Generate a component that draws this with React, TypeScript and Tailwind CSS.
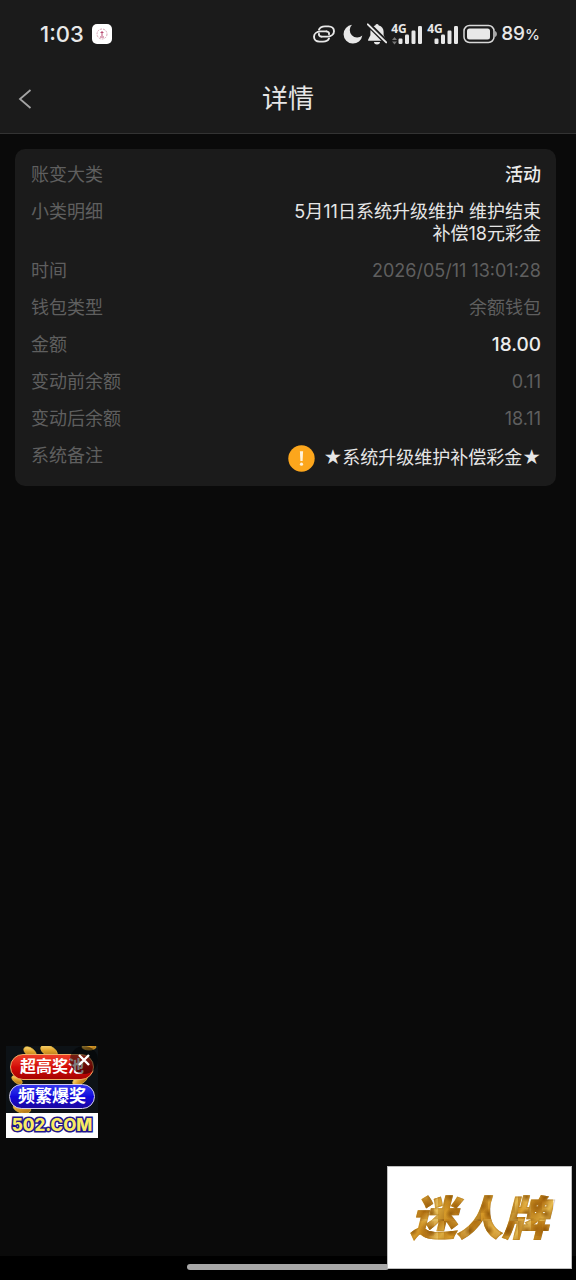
import type { ReactNode } from 'react';

type Tone = 'muted' | 'bright' | 'strong';

const toneClass: Record<Tone, string> = {
  muted: 'text-[#5f5f5f]',
  bright: 'text-[#e6e6e6]',
  strong: 'font-medium text-[#ececec]',
};

const rows: { label: string; value: ReactNode; tone: Tone }[] = [
  { label: '账变大类', value: '活动', tone: 'strong' },
  { label: '小类明细', value: '5月11日系统升级维护 维护结束补偿18元彩金', tone: 'bright' },
  { label: '时间', value: '2026/05/11 13:01:28', tone: 'muted' },
  { label: '钱包类型', value: '余额钱包', tone: 'muted' },
  { label: '金额', value: <span className="block text-[19px] leading-[22px]">18.00</span>, tone: 'strong' },
  { label: '变动前余额', value: '0.11', tone: 'muted' },
  { label: '变动后余额', value: '18.11', tone: 'muted' },
  { label: '系统备注', value: <Remark />, tone: 'bright' },
];

function Remark() {
  return (
    <span className="flex h-[26px] items-center gap-2">
      <svg className="size-[27px]" viewBox="0 0 27 27" aria-hidden="true">
        <circle cx="13.5" cy="13.5" r="13.2" fill="#fca61c" />
        <path d="M11.9 6.2h3.2l-.5 9.8h-2.2z" fill="#fff3dc" />
        <circle cx="13.5" cy="19.2" r="1.6" fill="#fff3dc" />
      </svg>
      <span>★系统升级维护补偿彩金★</span>
    </span>
  );
}

function Signal({ arrows = false }: { arrows?: boolean }) {
  return (
    <span className="relative block h-[22px] w-8">
      <svg className="h-[22px] w-8" viewBox="0 0 32 22" fill="#e8e8e8" aria-hidden="true">
        {arrows && <path d="M1 17l2.5-3 2.5 3zM1 18.5l2.5 3 2.5-3z" fill="#777" />}
        <rect x="7.5" y="15.5" width="4" height="5.5" rx="1.2" />
        <rect x="14" y="11.5" width="4" height="9.5" rx="1.2" />
        <rect x="20.5" y="7.5" width="4" height="13.5" rx="1.2" />
        <rect x="27" y="3" width="4" height="18" rx="1.2" />
      </svg>
      <span className="absolute top-0 left-0 font-['Open_Sans',sans-serif] text-[12px] leading-[11px] font-bold">4G</span>
    </span>
  );
}

function StatusBar() {
  return (
    <div className="flex h-[68px] items-center justify-between pr-9 pl-10 text-[#e8e8e8]">
      <div className="flex items-center gap-2">
        <span className="text-[22px] leading-7 font-medium">1:03</span>
        <svg className="size-5" viewBox="0 0 20 20" fill="none" aria-hidden="true">
          <rect width="20" height="20" rx="5" fill="#fff" />
          <circle cx="10" cy="10" r="5" stroke="#d9a3b4" strokeDasharray="2 1" />
          <path d="M10 7v5M8 13h4M8.5 8.5h3" stroke="#b84c72" />
        </svg>
      </div>
      <div className="flex items-center gap-1">
        <svg className="mr-1 h-[18px] w-[22px]" viewBox="0 0 22 18" fill="none" stroke="#e8e8e8" strokeWidth="1.9" strokeLinecap="round" aria-hidden="true">
          <path d="M8.5 11.6H14.5C18.5 11.4 21 9 21 6.2C21 3.4 18.8 1.4 15.5 1.4H12C9.2 1.4 6.8 2.6 6 4.6" />
          <path d="M13.5 6.4H7.5C3.5 6.6 1 9 1 11.8C1 14.6 3.2 16.6 6.5 16.6H10C12.8 16.6 15.2 15.4 16 13.4" />
          <path d="M8.5 11.6C6.6 11.4 5.6 10 6 8.8M13.5 6.4C15.4 6.6 16.4 8 16 9.2" />
        </svg>
        <svg className="size-5" viewBox="0 0 20 20" aria-hidden="true">
          <path d="M9 .8A9.4 9.4 0 1 0 19.3 11.4A7 7 0 0 1 9 .8Z" fill="#e8e8e8" />
        </svg>
        <svg className="h-[22px] w-5" viewBox="0 0 20 22" fill="#e8e8e8" aria-hidden="true">
          <path d="M10 .9a1.8 1.8 0 0 1 1.8 1.5c3 .8 4.8 3.1 4.8 6.3v3.6l2.3 4.4v1H1.1v-1l2.3-4.4V8.7c0-3.2 1.8-5.5 4.8-6.3A1.8 1.8 0 0 1 10 .9ZM7 19h6a3 2.4 0 0 1-6 0Z" />
          <path d="M0 0L20 20" stroke="#1b1b1b" strokeWidth="5" />
          <path d="M.8 1.4L19.2 19.4" stroke="#e8e8e8" strokeWidth="2" strokeLinecap="round" />
        </svg>
        <Signal arrows />
        <Signal />
        <svg className="h-5 w-[34px]" viewBox="0 0 34 20" fill="none" aria-hidden="true">
          <rect x="1" y="1.5" width="30" height="17" rx="5.5" stroke="#d8d8d8" strokeWidth="1.5" />
          <rect x="4" y="4.5" width="23" height="11" rx="2.5" fill="#e8e8e8" />
          <path d="M32.3 7c1.8.8 1.8 5.2 0 6z" fill="#e8e8e8" />
        </svg>
        <span className="text-[19px] leading-7 font-medium">
          89<span className="text-[15px]">%</span>
        </span>
      </div>
    </div>
  );
}

function Coins() {
  return (
    <svg className="absolute inset-0 size-full" viewBox="0 0 92 92" fill="none" aria-hidden="true">
      <defs>
        <linearGradient id="coin" x1="0" y1="0" x2="1" y2="1">
          <stop offset="0" stopColor="#fff0a0" />
          <stop offset=".45" stopColor="#e3a52c" />
          <stop offset="1" stopColor="#94590c" />
        </linearGradient>
      </defs>
      <g fill="url(#coin)" stroke="#e8b93c" strokeWidth=".7">
        <ellipse cx="24" cy="6" rx="7" ry="4" transform="rotate(35 24 6)" />
        <ellipse cx="43" cy="5" rx="9" ry="5" transform="rotate(28 43 5)" />
        <ellipse cx="83" cy="1" rx="7" ry="3" />
        <ellipse cx="74" cy="34" rx="8" ry="4" transform="rotate(-28 74 34)" />
        <ellipse cx="16" cy="62" rx="9" ry="5" transform="rotate(15 16 62)" />
        <ellipse cx="11" cy="34" rx="6" ry="3" transform="rotate(35 11 34)" />
      </g>
    </svg>
  );
}

function JackpotAd() {
  return (
    <aside className="absolute bottom-[142px] left-1.5 h-[92px] w-[92px] overflow-hidden bg-[#0d1216]">
      <Coins />
      <a href="#jackpot" className="relative flex h-full flex-col pt-2 text-center font-bold text-white">
        <span className="mx-1 h-[26px] rounded-full border border-[#f2ae65] bg-linear-to-b from-[#ef3e27] via-[#d40b08] to-[#a60302] text-[16px] leading-[22px]">
          超高奖池
        </span>
        <span className="mx-[3px] mt-1 h-[25px] rounded-full border border-[#d2ccee] bg-linear-to-b from-[#3636ed] via-[#1208dd] to-[#1a079f] text-[17px] leading-[23px]">
          频繁爆奖
        </span>
        <span className="mt-auto h-[25px] bg-white text-[17px] leading-[25px] font-extrabold text-[#f8ec62] [-webkit-text-stroke:3px_#21158e] [paint-order:stroke_fill]">
          502.COM
        </span>
      </a>
      <button type="button" aria-label="关闭" className="absolute top-0 right-0 flex size-7 items-center justify-center rounded-full bg-black/50">
        <svg className="size-3" viewBox="0 0 12 12" stroke="#fff" strokeWidth="2.4" aria-hidden="true">
          <path d="M1 1L11 11M11 1L1 11" />
        </svg>
      </button>
    </aside>
  );
}

function BrandCard() {
  return (
    <aside className="absolute right-1 bottom-[11px] flex h-[103px] w-[185px] items-center justify-center border border-[#bfbfbf] bg-white">
      <span className="bg-[radial-gradient(circle_at_30%_40%,#8a5208cc_0,transparent_32%),radial-gradient(circle_at_80%_70%,#9a5d0acc_0,transparent_36%),linear-gradient(65deg,#d09a2ecc_0%,transparent_50%,#f0cf73cc_100%),linear-gradient(125deg,#a0640e_0%,#d99a26_30%,#ad6a0e_55%,#e5b84c_75%,#935a0e_100%)] bg-[length:19px_17px,27px_23px,31px_29px,37px_31px] bg-clip-text px-1 text-[46px] leading-[56px] font-black text-transparent italic [-webkit-text-stroke:1px_#a8700f66]">
        迷人牌
      </span>
    </aside>
  );
}

export default function App() {
  return (
    <div className="relative flex min-h-screen flex-col bg-[#0a0a0a] font-['Inter','Noto_Sans_CJK_SC',sans-serif]">
      <header className="border-b border-[#333] bg-[#1b1b1b]">
        <StatusBar />
        <div className="grid h-[65px] grid-cols-[48px_1fr_48px] items-center pb-1">
          <button type="button" aria-label="返回" className="flex h-full items-center pl-[18px]">
            <svg className="h-5 w-[14px]" viewBox="0 0 14 20" fill="none" stroke="#a4a4a4" strokeWidth="1.8" aria-hidden="true">
              <path d="M12.5 1L2 10L12.5 19" />
            </svg>
          </button>
          <h1 className="text-center text-[26px] leading-9 text-[#e6e6e6]">详情</h1>
        </div>
      </header>

      <main className="flex-1 pt-[15px] pr-5 pl-[15px]">
        <dl className="flex flex-col gap-[15px] rounded-[10px] bg-[#1b1b1b] p-[15px] pl-4 text-[18px] leading-[22px]">
          {rows.map((row) => (
            <div key={row.label} className="flex justify-between gap-4">
              <dt className="shrink-0 text-[#5f5f5f]">{row.label}</dt>
              <dd className={`max-w-[264px] text-right ${toneClass[row.tone]}`}>{row.value}</dd>
            </div>
          ))}
        </dl>
      </main>

      <footer className="flex h-6 justify-center bg-black pt-2">
        <div className="h-[6px] w-[202px] rounded-full bg-[#a8a8a8]" />
      </footer>

      <JackpotAd />
      <BrandCard />
    </div>
  );
}
